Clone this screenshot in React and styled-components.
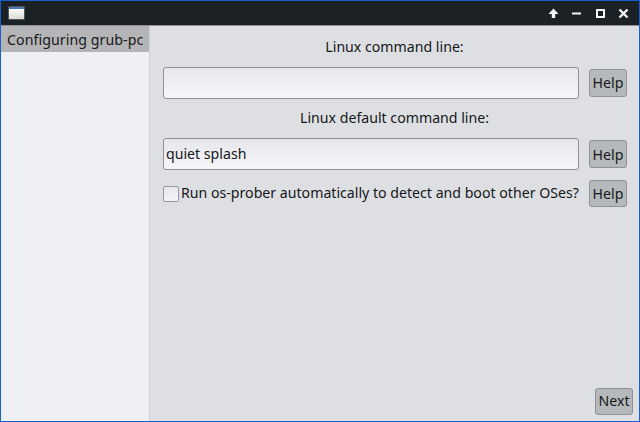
import React from "react";
import styled, { createGlobalStyle } from "styled-components";

const Global = createGlobalStyle`
  html, body { margin: 0; padding: 0; background: #dedfe2; }
  body { font-family: "Noto Sans", "DejaVu Sans", sans-serif; font-size: 14.15px; color: #15181b; }
`;

const Win = styled.div`
  box-sizing: border-box;
  width: 640px;
  height: 422px;
  border: 1px solid #1a5fd0;
  display: flex;
  flex-direction: column;
  overflow: hidden;
`;
const TitleBar = styled.div`
  height: 24px;
  flex: none;
  background: #1c2125;
  display: flex;
  align-items: center;
  padding: 0 8px 0 7.5px;
  box-sizing: border-box;
`;
const AppIcon = styled.div`
  box-sizing: border-box;
  width: 15px;
  height: 12px;
  border-top: 2px solid #4a78c0;
  background: linear-gradient(#fdfdfd, #d8d8d4);
  box-shadow: 0 0 0 0.5px #8a8a8a;
`;
const WinButtons = styled.div`
  margin-left: auto;
  display: flex;
  align-items: center;
  gap: 8.5px;
`;
const WinSvg = styled.svg`
  width: 15px;
  height: 15px;
  display: block;
`;
const Body = styled.div`
  flex: 1;
  display: flex;
  min-height: 0;
  border-top: 1px solid #8f9194;
`;
const Sidebar = styled.div`
  width: 148px;
  flex: none;
  background: #eff0f5;
  border-right: 1px solid #cfd0d3;
`;
const SideItem = styled.div`
  height: 26px;
  line-height: 28px;
  padding-left: 6px;
  background: #b5b5b7;
  white-space: nowrap;
  letter-spacing: 0.08px;
`;
const Main = styled.div`
  flex: 1;
  background: #dedfe2;
  display: flex;
  flex-direction: column;
  padding: 0 6px 6px 13px;
  min-width: 0;
`;
const Label = styled.div`
  height: 19px;
  line-height: 19px;
  text-align: center;
  width: 463px;
  margin-top: ${p => p.$top}px;
`;
const Row = styled.div`
  display: flex;
  align-items: center;
  width: 464px;
  justify-content: space-between;
  margin-top: ${p => p.$top}px;
`;
const Input = styled.input`
  box-sizing: border-box;
  width: 416px;
  height: 32px;
  border: 1px solid #8e9092;
  border-radius: 3px;
  padding: 0 3px 2px 2px;
  font: inherit;
  color: inherit;
  background: linear-gradient(#e6e7ea, #f6f6fb);
  outline: none;
`;
const PushButton = styled.button`
  box-sizing: border-box;
  width: 38px;
  height: ${p => p.$h || 28}px;
  padding: 0 0 ${p => p.$low ? 0 : 2}px;
  border: 1px solid #8f9294;
  border-radius: 3px;
  background: #b5b9bb;
  font: inherit;
  color: inherit;
`;
const CheckLabel = styled.label`
  display: flex;
  align-items: center;
  gap: 2.5px;
  white-space: nowrap;
  margin-left: -0.5px;
  line-height: 19px;
  padding-bottom: 2px;
`;
const Box = styled.span`
  box-sizing: border-box;
  display: block;
  width: 16px;
  height: 16px;
  margin-top: 2px;
  border: 1px solid #96989a;
  border-radius: 2px;
  background: linear-gradient(#e6e7ea, #f4f4f8);
`;
const Footer = styled.div`
  margin-top: auto;
  display: flex;
  justify-content: flex-end;
`;

const Arrow = () => (
  <WinSvg viewBox="0 0 15 15"><path d="M7.5 2.5 L12.5 8 H9.2 V12 H5.8 V8 H2.5 Z" fill="#f6f6f6" /></WinSvg>
);
const Minimize = () => (
  <WinSvg viewBox="0 0 15 15"><rect x="3" y="6.5" width="9" height="2" fill="#f6f6f6" /></WinSvg>
);
const Maximize = () => (
  <WinSvg viewBox="0 0 15 15"><rect x="4" y="4" width="7" height="7" fill="none" stroke="#f6f6f6" strokeWidth="2" /></WinSvg>
);
const Close = () => (
  <WinSvg viewBox="0 0 15 15"><path d="M3.5 3.5 L11.5 11.5 M11.5 3.5 L3.5 11.5" stroke="#f6f6f6" strokeWidth="2.4" /></WinSvg>
);

export default function App() {
  return (
    <>
      <Global />
      <Win>
        <TitleBar>
          <AppIcon />
          <WinButtons>
            <Arrow />
            <Minimize />
            <Maximize />
            <Close />
          </WinButtons>
        </TitleBar>
        <Body>
          <Sidebar>
            <SideItem>Configuring grub-pc</SideItem>
          </Sidebar>
          <Main>
            <Label $top={11}>Linux command line:</Label>
            <Row $top={11}>
              <Input readOnly value="" />
              <PushButton>Help</PushButton>
            </Row>
            <Label $top={9}>Linux default command line:</Label>
            <Row $top={11}>
              <Input readOnly value="quiet splash" />
              <PushButton $low>Help</PushButton>
            </Row>
            <Row $top={10}>
              <CheckLabel><Box />Run os-prober automatically to detect and boot other OSes?</CheckLabel>
              <PushButton $h={27} $low>Help</PushButton>
            </Row>
            <Footer><PushButton $h={27}>Next</PushButton></Footer>
          </Main>
        </Body>
      </Win>
    </>
  );
}
